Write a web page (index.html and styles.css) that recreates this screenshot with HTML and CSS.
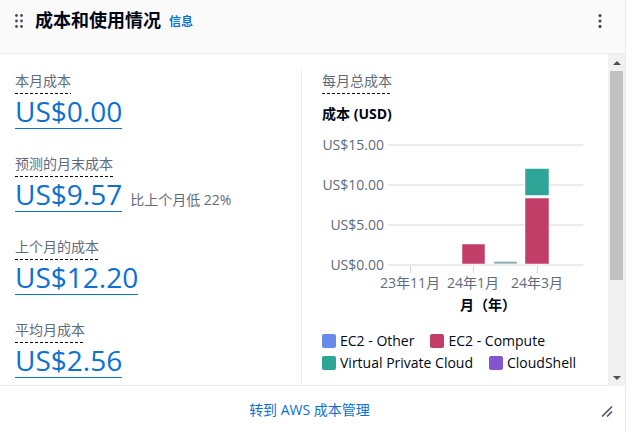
FILE: index.html
```html
<!DOCTYPE html>
<html lang="zh-CN">
<head>
<meta charset="utf-8">
<title>成本和使用情况</title>
<link rel="stylesheet" href="styles.css">
</head>
<body>
<div class="card">
  <header class="header">
    <svg class="drag" width="8" height="14" viewBox="0 0 8 14">
      <circle cx="1.5" cy="1.5" r="1.4"/><circle cx="6.5" cy="1.5" r="1.4"/>
      <circle cx="1.5" cy="7" r="1.4"/><circle cx="6.5" cy="7" r="1.4"/>
      <circle cx="1.5" cy="12.5" r="1.4"/><circle cx="6.5" cy="12.5" r="1.4"/>
    </svg>
    <h2 class="title">成本和使用情况</h2>
    <a class="info">信息</a>
    <span class="grow"></span>
    <svg class="kebab" width="4" height="14" viewBox="0 0 4 14">
      <circle cx="2" cy="1.6" r="1.6"/><circle cx="2" cy="7" r="1.6"/><circle cx="2" cy="12.4" r="1.6"/>
    </svg>
  </header>
  <div class="body">
    <div class="content">
      <div class="columns">
        <div class="col-left">
          <div class="metric">
            <div class="label"><span class="dashed">本月成本</span></div>
            <div class="value-row"><a class="value">US$0.00</a></div>
          </div>
          <div class="metric">
            <div class="label"><span class="dashed">预测的月末成本</span></div>
            <div class="value-row"><a class="value">US$9.57</a><span class="delta">比上个月低 22%</span></div>
          </div>
          <div class="metric">
            <div class="label"><span class="dashed">上个月的成本</span></div>
            <div class="value-row"><a class="value">US$12.20</a></div>
          </div>
          <div class="metric">
            <div class="label"><span class="dashed">平均月成本</span></div>
            <div class="value-row"><a class="value">US$2.56</a></div>
          </div>
        </div>
        <div class="col-right">
          <div class="label"><span class="dashed">每月总成本</span></div>
          <div class="chart-title">成本 (USD)</div>
          <svg class="chart" width="270" height="200" viewBox="0 0 270 200">
            <g class="grid">
              <line x1="66" y1="21" x2="261" y2="21"/>
              <line x1="66" y1="61" x2="261" y2="61"/>
              <line x1="66" y1="101" x2="261" y2="101"/>
              <line x1="66" y1="141" x2="261" y2="141"/>
            </g>
            <g class="ylabels">
              <text x="62" y="26">US$15.00</text>
              <text x="62" y="66">US$10.00</text>
              <text x="62" y="106">US$5.00</text>
              <text x="62" y="146">US$0.00</text>
            </g>
            <g class="ticks">
              <line x1="88.5" y1="142" x2="88.5" y2="149"/>
              <line x1="151.5" y1="142" x2="151.5" y2="149"/>
              <line x1="215.5" y1="142" x2="215.5" y2="149"/>
            </g>
            <g class="bars">
              <rect class="compute" x="140" y="120" width="23" height="20"/>
              <rect class="compute" x="172" y="139" width="23" height="1"/>
              <rect class="vpc" x="172" y="137.5" width="23" height="1.5"/>
              <rect class="compute" x="203" y="74" width="24" height="66"/>
              <rect class="vpc" x="203" y="44.5" width="24" height="27"/>
            </g>
            <g class="xlabels">
              <text x="88" y="164">23年11月</text>
              <text x="151" y="164">24年1月</text>
              <text x="215" y="164">24年3月</text>
            </g>
            <text class="xtitle" x="166" y="186">月（年）</text>
          </svg>
          <div class="legend">
            <span class="item"><span class="swatch other"></span>EC2 - Other</span>
            <span class="item"><span class="swatch compute"></span>EC2 - Compute</span>
            <span class="item"><span class="swatch vpc"></span>Virtual Private Cloud</span>
            <span class="item"><span class="swatch shell"></span>CloudShell</span>
          </div>
        </div>
      </div>
    </div>
    <div class="scrollbar">
      <div class="arrow"><span class="tri-up"></span></div>
      <div class="thumb"></div>
      <div class="grow"></div>
      <div class="arrow"><span class="tri-down"></span></div>
    </div>
  </div>
  <footer class="footer">
    <a class="footer-link">转到 AWS 成本管理</a>
    <svg class="resize" width="12" height="12" viewBox="0 0 12 12">
      <line x1="1" y1="11.5" x2="11" y2="1.5"/>
      <line x1="6" y1="11.5" x2="11" y2="6.5"/>
    </svg>
  </footer>
</div>
</body>
</html>
```

FILE: styles.css
```css
* { box-sizing: border-box; }

body {
  margin: 0;
  background: #ffffff;
  font-family: "Open Sans", "Noto Sans CJK SC", sans-serif;
  color: #000716;
}

.card {
  width: 626px;
  height: 431px;
  display: flex;
  flex-direction: column;
  border-right: 1px solid #e9ebed;
  background: #ffffff;
}

.header {
  height: 54px;
  flex: none;
  display: flex;
  align-items: flex-start;
  padding: 8px 23px 0 15px;
  background: #fafafa;
  border-bottom: 1px solid #e9ebed;
}

.drag {
  margin-top: 6px;
  fill: #414d5c;
  flex: none;
}

.title {
  margin: 0 0 0 12px;
  font-size: 18px;
  line-height: 24px;
  font-weight: 700;
  color: #000716;
}

.info {
  margin: 6px 0 0 8px;
  font-size: 12px;
  line-height: 16px;
  font-weight: 700;
  color: #0972d3;
}

.grow { flex: 1; }

.kebab {
  margin-top: 6px;
  fill: #414d5c;
  flex: none;
}

.body {
  height: 332px;
  flex: none;
  display: flex;
}

.content {
  flex: 1;
  display: flex;
  flex-direction: column;
  overflow: hidden;
  border-bottom: 1px solid #e9ebed;
}

.columns {
  flex: 1;
  margin-top: 16px;
  display: grid;
  grid-template-columns: 301px 1fr;
}

.col-left {
  padding: 3px 0 0 15px;
  display: flex;
  flex-direction: column;
  gap: 27px;
}

.col-right {
  border-left: 1px solid #e9ebed;
  padding: 3px 0 0 20px;
}

.label {
  display: flex;
  font-size: 14px;
  line-height: 16px;
  color: #5f6b7a;
}

.dashed {
  display: block;
  padding-bottom: 5px;
  background-image: repeating-linear-gradient(90deg, #000716 0 3px, transparent 3px 5px);
  background-size: 100% 1px;
  background-repeat: no-repeat;
  background-position: left bottom;
}

.value-row {
  font-size: 28px;
  line-height: 34px;
  white-space: nowrap;
}

.value {
  display: inline-block;
  color: #0972d3;
  font-size: 28px;
  line-height: 34px;
  border-bottom: 1px solid #0972d3;
}

.delta {
  margin-left: 8px;
  font-size: 14px;
  line-height: 20px;
  color: #5f6b7a;
}

.chart-title {
  margin-top: 10px;
  font-size: 14px;
  line-height: 20px;
  font-weight: 700;
  color: #000716;
}

.chart {
  display: block;
  font-family: "Open Sans", "Noto Sans CJK SC", sans-serif;
}

.grid line {
  stroke: #e9ebed;
  stroke-width: 2;
}

.ticks line {
  stroke: #d1d5db;
  stroke-width: 1;
}

.ylabels text {
  font-size: 14px;
  fill: #5f6b7a;
  text-anchor: end;
}

.xlabels text {
  font-size: 14px;
  fill: #5f6b7a;
  text-anchor: middle;
}

.xtitle {
  font-size: 14px;
  font-weight: 700;
  fill: #000716;
  text-anchor: middle;
}

.bars rect { stroke: #ffffff; stroke-width: 0.5; }
.bars .compute { fill: #c33d69; }
.bars .vpc { fill: #2ea597; }

.legend {
  margin-top: 6px;
  display: flex;
  flex-wrap: wrap;
  column-gap: 16px;
  font-size: 14px;
  line-height: 22px;
  color: #000716;
}

.item {
  display: inline-flex;
  align-items: center;
  gap: 4px;
}

.swatch {
  width: 14px;
  height: 14px;
  border-radius: 2px;
}

.swatch.other { background: #688ae8; }
.swatch.compute { background: #c33d69; }
.swatch.vpc { background: #2ea597; }
.swatch.shell { background: #8456ce; }

.scrollbar {
  width: 17px;
  flex: none;
  display: flex;
  flex-direction: column;
  background: #f1f1f1;
}

.arrow {
  height: 17px;
  display: flex;
  align-items: center;
  justify-content: center;
}

.tri-up {
  width: 0;
  height: 0;
  border-left: 4px solid transparent;
  border-right: 4px solid transparent;
  border-bottom: 4px solid #505050;
}

.tri-down {
  width: 0;
  height: 0;
  border-left: 4px solid transparent;
  border-right: 4px solid transparent;
  border-top: 4px solid #505050;
}

.thumb {
  height: 209px;
  margin: 0 2px;
  background: #c1c1c1;
}

.footer {
  flex: 1;
  position: relative;
  display: flex;
  justify-content: center;
  padding: 14px 6px 0 0;
}

.footer-link {
  font-size: 14px;
  line-height: 20px;
  color: #0972d3;
}

.resize {
  position: absolute;
  right: 12px;
  top: 19px;
  stroke: #414d5c;
  stroke-width: 1.5;
}
```
